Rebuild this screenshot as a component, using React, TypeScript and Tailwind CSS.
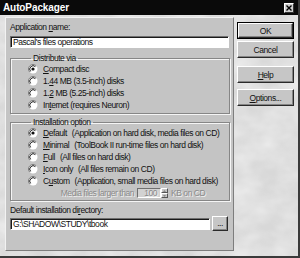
import React from "react";

const font = { fontFamily: '"Liberation Sans", Arial, sans-serif' };

function Radio({ checked = false }: { checked?: boolean }) {
  return (
    <svg width="10" height="10" viewBox="0 0 10 10" className="shrink-0">
      <circle cx="5" cy="5" r="4.5" fill="#ffffff" />
      <path d="M1.8 8.2 A4.5 4.5 0 0 1 8.2 1.8" fill="none" stroke="#7c7c7c" strokeWidth="1" />
      <path d="M2.6 7.4 A3.4 3.4 0 0 1 7.4 2.6" fill="none" stroke="#1a1a1a" strokeWidth="1" />
      {checked && <circle cx="5" cy="5" r="1.6" fill="#111111" />}
    </svg>
  );
}

function Option({ checked, label, hint }: { checked?: boolean; label: React.ReactNode; hint?: string }) {
  return (
    <div className="flex h-[12px] items-center">
      <Radio checked={checked} />
      <span className="ml-[5px] whitespace-nowrap">
        {label}
        {hint && <span className="ml-[5px]">{hint}</span>}
      </span>
    </div>
  );
}

function Btn({ children, def = false }: { children: React.ReactNode; def?: boolean }) {
  return (
    <div className={`h-[17px] w-[57px] ${def ? "border border-black" : ""}`}>
      <div className="flex h-full w-full items-center justify-center border border-t-white border-l-white border-r-[#2a2a2a] border-b-[#2a2a2a] bg-[#c6c6c6] shadow-[inset_-1px_-1px_0_#858585]">
        {children}
      </div>
    </div>
  );
}

export default function App() {
  return (
    <div
      style={font}
      className="relative h-[258px] w-[300px] overflow-hidden border-r-2 border-b-2 border-r-[#3a3a3a] border-b-[#3a3a3a] bg-[#d8d8d8] text-[8.5px] leading-[10px] tracking-[-0.45px] text-[#111]"
    >
      {/* marble texture */}
      <svg className="pointer-events-none absolute inset-0" width="300" height="258">
        <filter id="marble">
          <feTurbulence type="fractalNoise" baseFrequency="0.035 0.05" numOctaves="3" seed="4" />
          <feColorMatrix type="matrix" values="0 0 0 0 1  0 0 0 0 1  0 0 0 0 1  0 0 0 -1.4 1.05" />
        </filter>
        <rect width="300" height="258" filter="url(#marble)" opacity="0.55" />
      </svg>

      <div className="relative flex h-[15px] items-center justify-between bg-[#0a0a0a] pl-[3px] pr-[4px]">
        <span className="text-[10px] font-bold tracking-[-0.1px] text-white">AutoPackager</span>
        <div className="flex h-[10px] w-[10px] items-center justify-center border border-t-white border-l-white border-r-[#333] border-b-[#333] bg-[#cfcfcf]">
          <svg width="6" height="6" viewBox="0 0 6 6">
            <path d="M0.5 0.5 L5.5 5.5 M5.5 0.5 L0.5 5.5" stroke="#000" strokeWidth="1.4" />
          </svg>
        </div>
      </div>

      <div className="relative flex gap-[3px] pl-[5px]">
        {/* main panel */}
        <div className="mt-[2px] h-[234px] w-[229px] border border-t-[#f2f2f2] border-l-[#f2f2f2] border-r-[#7d7d7d] border-b-[#7d7d7d] bg-[#c4c4c4] pl-[4px] pt-[4px]">
          <div className="h-[10px]">
            Application <u>n</u>ame:
          </div>
          <div className="mt-[4px] flex h-[12px] w-[219px] items-center border border-t-[#6f6f6f] border-l-[#6f6f6f] border-r-white border-b-white bg-white pl-[2px] shadow-[inset_1px_1px_0_#1a1a1a]">
            Pascal's files operations
          </div>

          <fieldset className="mt-[5px] w-[220px] border border-[#868686] pb-[2px] pl-[17px] shadow-[1px_1px_0_#f5f5f5,inset_1px_1px_0_#f5f5f5]">
            <legend className="ml-[3px] px-[2px] leading-[10px]">Distribute via</legend>
            <Option checked label={<><u>C</u>ompact disc</>} />
            <Option label={<>1.<u>4</u>4 MB (3.5-inch) disks</>} />
            <Option label={<>1.<u>2</u> MB (5.25-inch) disks</>} />
            <Option label={<>In<u>t</u>ernet (requires Neuron)</>} />
          </fieldset>

          <fieldset className="mt-[3px] w-[220px] border border-[#868686] pb-[1px] pl-[17px] shadow-[1px_1px_0_#f5f5f5,inset_1px_1px_0_#f5f5f5]">
            <legend className="ml-[3px] px-[2px] leading-[10px]">Installation option</legend>
            <Option checked label={<><u>D</u>efault</>} hint="(Application on hard disk, media files on CD)" />
            <Option label={<><u>M</u>inimal</>} hint="(ToolBook II run-time files on hard disk)" />
            <Option label={<><u>F</u>ull</>} hint="(All files on hard disk)" />
            <Option label={<><u>I</u>con only</>} hint="(All files remain on CD)" />
            <Option label={<>C<u>u</u>stom</>} hint="(Application, small media files on hard disk)" />
            <div className="flex h-[12px] items-center text-[#8a8a8a] [text-shadow:1px_1px_0_#f0f0f0]">
              <span className="w-[106px] text-right">Media files larger than</span>
              <div className="ml-[3px] flex h-[10px] w-[24px] items-center justify-end border border-t-[#6f6f6f] border-l-[#6f6f6f] border-r-white border-b-white bg-[#d2d2d2] pr-[3px]">
                100
              </div>
              <div className="flex h-[10px] w-[7px] flex-col">
                <div className="flex h-[5px] items-center justify-center border border-t-white border-l-white border-r-[#555] border-b-[#555] bg-[#c6c6c6]">
                  <svg width="3" height="2" viewBox="0 0 3 2"><path d="M1.5 0 L3 2 L0 2 Z" fill="#8a8a8a" /></svg>
                </div>
                <div className="flex h-[5px] items-center justify-center border border-t-white border-l-white border-r-[#555] border-b-[#555] bg-[#c6c6c6]">
                  <svg width="3" height="2" viewBox="0 0 3 2"><path d="M0 0 L3 0 L1.5 2 Z" fill="#8a8a8a" /></svg>
                </div>
              </div>
              <span className="ml-[3px]">KB on CD</span>
            </div>
          </fieldset>

          <div className="mt-[4px] h-[10px]">
            Default installation di<u>r</u>ectory:
          </div>
          <div className="mt-[1px] flex h-[15px] items-center gap-[2px]">
            <div className="flex h-[12px] w-[200px] items-center border border-t-[#6f6f6f] border-l-[#6f6f6f] border-r-white border-b-white bg-white pl-[2px] shadow-[inset_1px_1px_0_#1a1a1a]">
              G:\SHADOW\STUDY\tbook
            </div>
            <div className="flex h-[15px] w-[16px] items-center justify-center border border-t-white border-l-white border-r-[#2a2a2a] border-b-[#2a2a2a] bg-[#c6c6c6] pb-[2px] shadow-[inset_-1px_-1px_0_#858585]">
              ...
            </div>
          </div>
        </div>

        {/* buttons */}
        <div className="mt-[7px] flex flex-col">
          <Btn def>OK</Btn>
          <div className="mt-[2px]">
            <Btn>Cancel</Btn>
          </div>
          <div className="mt-[8px]">
            <Btn>
              <u>H</u>elp
            </Btn>
          </div>
          <div className="mt-[6px]">
            <Btn>
              <u>O</u>ptions...
            </Btn>
          </div>
        </div>
      </div>
    </div>
  );
}
